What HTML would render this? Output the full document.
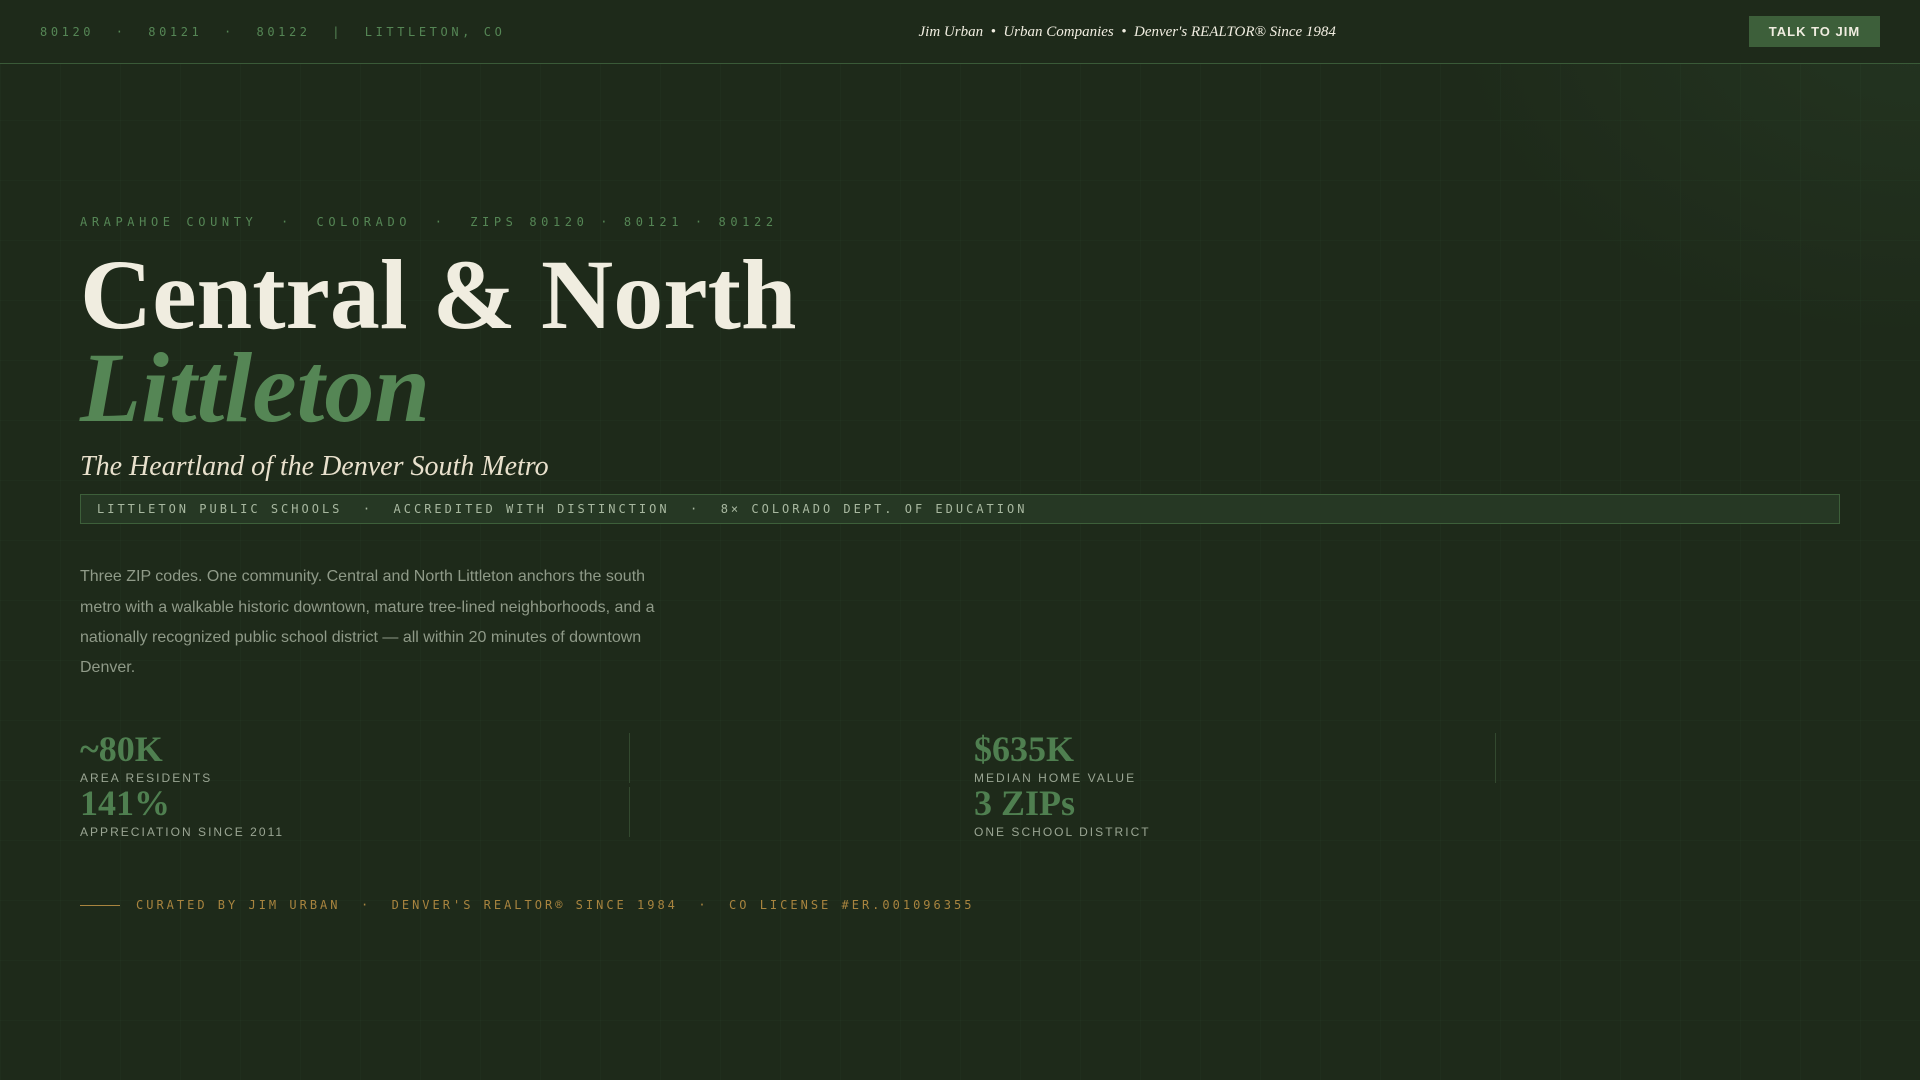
<!DOCTYPE html>
<html lang="en">
<head>
<meta charset="utf-8">
<title>Central & North Littleton</title>
<style>
html,body{margin:0;padding:0;width:1920px;height:1080px;overflow:hidden;background:#1e2a1a}
body{position:relative;font-family:"Liberation Sans",sans-serif}
.grid{position:absolute;inset:0;background-image:linear-gradient(rgba(74,124,78,.05) 1px,transparent 1px),linear-gradient(90deg,rgba(74,124,78,.05) 1px,transparent 1px);background-size:60px 60px}
.glow{position:absolute;left:1420px;top:0;width:500px;height:360px;background:radial-gradient(ellipse at 100% 0%,rgba(74,124,78,.13),transparent 68%)}
.t{position:absolute;white-space:pre;line-height:1}
.mono{font-family:"DejaVu Sans Mono",monospace}
.serif{font-family:"Liberation Serif",serif}
header{position:absolute;left:0;top:0;width:1920px;height:63px;background:#1e2a1a;border-bottom:1px solid #3a5a38}
.btn{position:absolute;left:1749px;top:16px;width:131px;height:31px;background:#3d5f3a;color:#f0ede0;font:bold 13px/31px "Liberation Sans",sans-serif;letter-spacing:1px;text-align:center}
.badge{position:absolute;left:80px;top:494px;width:1758px;height:28px;border:1px solid #3d5f3a;background:#263824}
.num{font-family:"Liberation Serif",serif;font-weight:bold;font-size:36px;color:#4f7f50}
.lab{font-size:12px;letter-spacing:2.02px;color:#9aa593}
.div{position:absolute;width:1px;height:50px;background:#33492f}
.p{font-size:16px;line-height:30px;color:#8f9a88;left:80px}
</style>
</head>
<body>
<div class="grid"></div>
<div class="glow"></div>
<header></header>
<div class="t mono" style="left:40px;top:26px;font-size:12px;letter-spacing:3.6px;color:#558655">80120  ·  80121  ·  80122  |  LITTLETON, CO</div>
<div class="t serif" style="left:918.5px;top:25px;font-size:15px;font-style:italic;color:#f0ede0">Jim Urban  •  Urban Companies  •  Denver's REALTOR® Since 1984</div>
<div class="btn">TALK TO JIM</div>

<div class="t mono" style="left:80px;top:216px;font-size:12px;letter-spacing:4.6px;color:#558655">ARAPAHOE COUNTY  ·  COLORADO  ·  ZIPS 80120 · 80121 · 80122</div>
<div class="t serif" style="left:80px;top:245px;font-size:100px;font-weight:bold;color:#f0ede0">Central &amp; North</div>
<div class="t serif" style="left:80px;top:338px;font-size:100px;font-weight:bold;font-style:italic;color:#558655">Littleton</div>
<div class="t serif" style="left:80px;top:453px;font-size:28px;font-style:italic;color:#e8e0cc">The Heartland of the Denver South Metro</div>
<div class="badge"></div>
<div class="t mono" style="left:97px;top:503px;font-size:12px;letter-spacing:3px;color:#a8b8a0">LITTLETON PUBLIC SCHOOLS  ·  ACCREDITED WITH DISTINCTION  ·  8× COLORADO DEPT. OF EDUCATION</div>

<div class="t p" style="top:562px">Three ZIP codes. One community. Central and North Littleton anchors the south</div>
<div class="t p" style="top:593px">metro with a walkable historic downtown, mature tree-lined neighborhoods, and a</div>
<div class="t p" style="top:623px">nationally recognized public school district — all within 20 minutes of downtown</div>
<div class="t p" style="top:653px">Denver.</div>

<div class="t num" style="left:80px;top:731px">~80K</div>
<div class="t lab" style="left:80px;top:772px">AREA RESIDENTS</div>
<div class="div" style="left:629px;top:733px"></div>
<div class="t num" style="left:974px;top:731px">$635K</div>
<div class="t lab" style="left:974px;top:772px">MEDIAN HOME VALUE</div>
<div class="div" style="left:1495px;top:733px"></div>
<div class="t num" style="left:80px;top:785px">141%</div>
<div class="t lab" style="left:80px;top:826px">APPRECIATION SINCE 2011</div>
<div class="div" style="left:629px;top:787px"></div>
<div class="t num" style="left:974px;top:785px">3 ZIPs</div>
<div class="t lab" style="left:974px;top:826px">ONE SCHOOL DISTRICT</div>

<div style="position:absolute;left:80px;top:905px;width:40px;height:1px;background:#a8843f"></div>
<div class="t mono" style="left:136px;top:899px;font-size:12px;letter-spacing:3px;color:#a8843f">CURATED BY JIM URBAN  ·  DENVER'S REALTOR® SINCE 1984  ·  CO LICENSE #ER.001096355</div>
</body>
</html>
